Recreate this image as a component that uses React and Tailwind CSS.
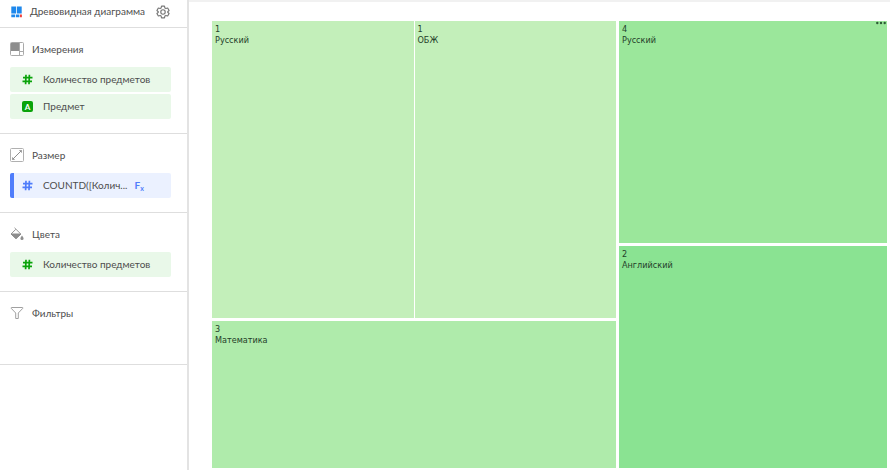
const font = "font-['Lato','Open_Sans',sans-serif]";

function TreemapIcon() {
  return (
    <svg className="size-3" viewBox="0 0 12 12" aria-hidden="true">
      <path fill="#1e88ec" d="M.3.500H5v7H.3zM5.800.500h4.900v7H5.800zM.3 8.400H4v2.900H.3zM4.800 8.400h3.600v2.900H4.800z" />
      <path fill="#f0403c" d="M9 8.400h1.900v2.900H9z" />
    </svg>
  );
}

function GearIcon() {
  return (
    <svg className="size-[14px]" viewBox="0 0 24 24" fill="none" stroke="#777" strokeWidth="2" strokeLinejoin="round" aria-hidden="true">
      <path d="M9.500 2h5l.7 3.100 1.800 1 3-.9 2.400 4.200-2.300 2.100v1l2.300 2.100-2.400 4.200-3-.9-1.800 1-.7 3.100h-5l-.7-3.100-1.800-1-3 .9-2.400-4.200 2.300-2.100v-1L1.600 9.400 4 5.200l3 .9 1.800-1z" />
      <circle cx="12" cy="12" r="3.800" />
    </svg>
  );
}

function DimensionsIcon() {
  return (
    <svg className="size-[14px]" viewBox="0 0 14 14" fill="none" aria-hidden="true">
      <rect x=".5" y=".5" width="13" height="13" rx="1" stroke="#aaa" />
      <path d="M9.500 1v12M9.500 9.500H13" stroke="#aaa" />
      <path d="M1 1h8v8H1z" fill="#8e8e8e" />
    </svg>
  );
}

function SizeIcon() {
  return (
    <svg className="size-[14px]" viewBox="0 0 14 14" fill="none" stroke="#8c8c8c" aria-hidden="true">
      <rect x=".5" y=".5" width="13" height="13" rx="1" stroke="#b0b0b0" />
      <path d="M2.700 11.300l8.600-8.600" />
      <path d="M9.300 2.500h2.200v2.200M2.500 9.300v2.200h2.200" strokeWidth=".8" />
    </svg>
  );
}

function ColorsIcon() {
  return (
    <svg className="size-[14px]" viewBox="0 0 14 14" fill="none" aria-hidden="true">
      <path d="M4.500.8l6.300 6.200L6 11.300 1 7l4.800-4.700" stroke="#999" />
      <path d="M1 7h10l-5 4.700z" fill="#8e8e8e" stroke="#8e8e8e" strokeLinejoin="round" />
      <path d="M12 8.500c1 1.400 1.600 2.200 1.600 3a1.600 1.600 0 0 1-3.200 0c0-.8.600-1.600 1.600-3z" fill="#8e8e8e" />
    </svg>
  );
}

function FilterIcon() {
  return (
    <svg className="size-[14px]" viewBox="0 0 14 14" fill="none" stroke="#a0a0a0" strokeLinejoin="round" aria-hidden="true">
      <path d="M1.500 1.500h11c.5 0 .5.500.3.800L8.300 7v5.500H5.700V7L1.200 2.300c-.2-.3-.2-.8.300-.8z" />
    </svg>
  );
}

function HashIcon({ className }) {
  return (
    <svg className={`size-[11px] ${className}`} viewBox="0 0 11 11" fill="none" stroke="currentColor" strokeWidth="1.700" aria-hidden="true">
      <path d="M4 .8L3.600 10.200M7.400.8L7 10.200M1 3.700h9.500M.5 7.300H10" />
    </svg>
  );
}

function LetterIcon() {
  return (
    <span className="flex size-[11px] items-center justify-center rounded-[2px] bg-[#0aa30a] text-[8px] leading-none font-bold text-white">
      A
    </span>
  );
}

function Section({ icon, title, children, className = "" }) {
  return (
    <section className={`border-b border-[#dedede] pt-[11px] pr-4 pb-[14px] pl-[10px] ${className}`}>
      <h2 className="flex h-5 items-center gap-2 text-[10px] text-[#4d4d4d]">
        {icon}
        {title}
      </h2>
      {children && <div className="mt-2 flex flex-col gap-[2px]">{children}</div>}
    </section>
  );
}

function Field({ icon, label }) {
  return (
    <button type="button" className="flex h-[25px] items-center gap-[10px] rounded-[2px] bg-[#e9f8e9] pl-3 text-left text-[10px] text-[#4d4d4d]">
      {icon}
      {label}
    </button>
  );
}

function Tile({ value, name, className, children }) {
  return (
    <div className={`relative min-h-0 min-w-0 pt-[3px] pl-[3px] font-['DejaVu_Sans_Condensed','DejaVu_Sans',sans-serif] text-[9px] leading-[11px] text-[#24402a] ${className}`}>
      <div>{value}</div>
      <div>{name}</div>
      {children}
    </div>
  );
}

export default function App() {
  return (
    <div className={`flex h-screen bg-white ${font}`}>
      <aside className="w-[189px] shrink-0 border-r-2 border-[#e3e3e3]">
        <header className="flex h-7 items-center border-b border-[#dedede] pb-1 pl-[11px]">
          <button type="button" className="flex items-center gap-[7px] text-[10px] whitespace-nowrap text-[#4d4d4d]">
            <TreemapIcon />
            Древовидная диаграмма
          </button>
          <button type="button" aria-label="Настройки" className="ml-[11px]">
            <GearIcon />
          </button>
        </header>
        <Section icon={<DimensionsIcon />} title="Измерения">
          <Field icon={<HashIcon className="text-[#0aa30a]" />} label="Количество предметов" />
          <Field icon={<LetterIcon />} label="Предмет" />
        </Section>
        <Section icon={<SizeIcon />} title="Размер">
          <button type="button" className="flex h-[25px] items-center rounded-[2px] border-l-4 border-[#4f7dfb] bg-[#ebf1ff] pl-2 text-left text-[10px] text-[#4d4d4d]">
            <HashIcon className="text-[#4f7dfb]" />
            <span className="ml-[10px]">COUNTD([Колич...</span>
            <span className="ml-[7px] font-bold text-[#4f7dfb]">
              F<sub className="text-[7px]">x</sub>
            </span>
          </button>
        </Section>
        <Section icon={<ColorsIcon />} title="Цвета">
          <Field icon={<HashIcon className="text-[#0aa30a]" />} label="Количество предметов" />
        </Section>
        <Section icon={<FilterIcon />} title="Фильтры" className="min-h-[73px]" />
      </aside>
      <main className="flex min-w-0 flex-1 flex-col border-t-2 border-[#f1f1f1] pt-[19px] pr-[3px] pb-[2px] pl-[23px]">
        <div className="grid min-h-0 flex-1 grid-cols-[404fr_268fr] gap-[3px]">
          <div className="grid min-h-0 grid-rows-[297fr_147fr] gap-[3px]">
            <div className="grid min-h-0 grid-cols-2 gap-px">
              <Tile value="1" name="Русский" className="bg-[#c3efba]" />
              <Tile value="1" name="ОБЖ" className="bg-[#c3efba]" />
            </div>
            <Tile value="3" name="Математика" className="bg-[#afebab]" />
          </div>
          <div className="grid min-h-0 grid-rows-2 gap-[3px]">
            <Tile value="4" name="Русский" className="bg-[#9be79b]">
              <button type="button" aria-label="Меню" className="absolute top-0 right-px flex text-[#2d5a35]">
                <svg className="h-1 w-[10px]" viewBox="0 0 10 4" fill="currentColor" aria-hidden="true">
                  <circle cx="1.300" cy="2" r="1.200" />
                  <circle cx="5" cy="2" r="1.200" />
                  <circle cx="8.700" cy="2" r="1.200" />
                </svg>
              </button>
            </Tile>
            <Tile value="2" name="Английский" className="bg-[#8ae392]" />
          </div>
        </div>
      </main>
    </div>
  );
}
